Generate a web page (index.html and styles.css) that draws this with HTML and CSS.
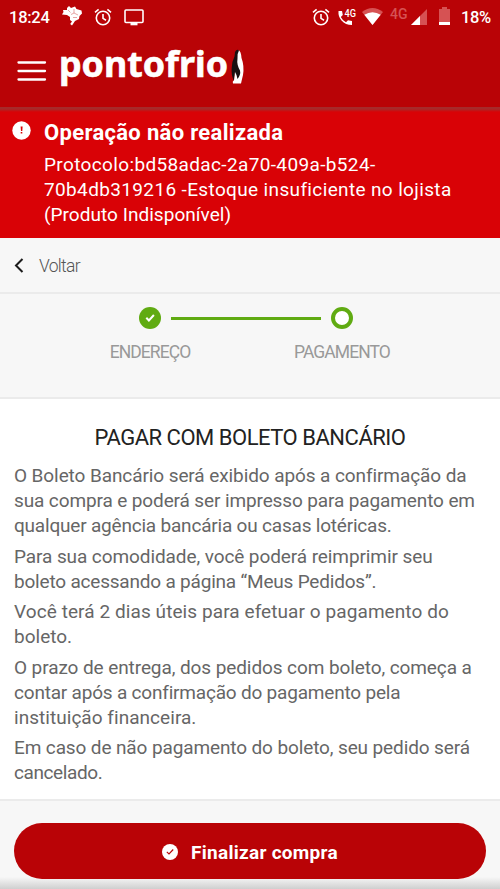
FILE: index.html
```html
<!DOCTYPE html>
<html lang="pt-BR">
<head>
<meta charset="utf-8">
<title>Pontofrio</title>
<link rel="stylesheet" href="styles.css">
</head>
<body>
<header class="top">
  <div class="status">
    <span class="clock">18:24</span>
    <svg class="brazil" width="22" height="22" viewBox="0 0 22 22"><path d="M2 5h4V3l2-2 2 2 4-1.500 1.500 2.500L20.500 5.500 21 8.500 18.500 11 18 14l-4 2-3 4.500-1.800-1.500 1.800-2.500-2-1.500V12L6 10 1 9.500 2.500 7z" fill="#fff"/><path d="M7 5l2.500 2.500M10 9.500l3-1.500 4 2M13 4v4M12 12.500h4" stroke="#cf4a4a" stroke-width=".5" fill="none"/></svg>
    <svg class="alarm" width="18" height="18" viewBox="0 0 18 18" fill="none" stroke="#fff" stroke-width="1.6"><circle cx="9" cy="10" r="6.7"/><path d="M1 4.3l3.6-3M17 4.3l-3.6-3M9 6v4.4l3 1.8"/></svg>
    <svg class="screen" width="20" height="17" viewBox="0 0 20 17"><rect x="1" y="1" width="18" height="12.5" rx="1" fill="none" stroke="#fff" stroke-width="1.6"/><path d="M6.5 14h7v2.3h-7z" fill="#fff"/></svg>
    <svg class="alarm2" width="18" height="18" viewBox="0 0 18 18" fill="none" stroke="#fff" stroke-width="1.6"><circle cx="9" cy="10" r="6.7"/><path d="M1 4.3l3.6-3M17 4.3l-3.6-3M9 6v4.4l3 1.8"/></svg>
    <svg class="call" width="20" height="19" viewBox="0 0 20 19"><path d="M1.500 3h3.500l.8 4-2 2q1.700 3.500 5.200 5.200l2-2 4 .8V17Q8.500 17 4.500 12.500 1 8.500 1.500 3z" fill="#fff"/><text x="7.500" y="9" textLength="11.500" lengthAdjust="spacingAndGlyphs" class="tiny">4G</text></svg>
    <svg class="wifi" width="21" height="17" viewBox="0 0 21 17"><path d="M0 4Q10.500-4 21 4L10.500 17z" fill="#d65253"/><path d="M2.300 6.800Q10.500 1.500 18.700 6.800L10.500 17z" fill="#fff"/></svg>
    <span class="net">4G</span>
    <svg class="signal" width="16" height="16" viewBox="0 0 16 16"><path d="M0 16L16 0v16z" fill="#d65253"/><path d="M0 16l9-9v9z" fill="#fff"/></svg>
    <svg class="battery" width="11" height="18" viewBox="0 0 11 18"><path d="M0 2h3V0h5v2h3v13H0z" fill="#d65253"/><path d="M0 15h11v3H0z" fill="#fff"/></svg>
    <span class="percent">18%</span>
  </div>
  <div class="brand">
    <svg class="menu" width="30" height="22" viewBox="0 0 30 22" stroke="#fff" stroke-width="2.300" stroke-linecap="round"><path d="M1.500 2.500h26.500M1.500 11h26.500M1.500 19.500h26.500"/></svg>
    <svg class="logo" width="186" height="50" viewBox="0 0 186 50"><text class="wordmark" x="-1" y="29" textLength="169" lengthAdjust="spacingAndGlyphs">pontofrio</text><path d="M178.500 2Q181 3 181.500 10 184.500 18 183 27q-1 4-2 8.500H173q-1-2 1-3.500 1-5 0-11l1-12z" fill="#fff"/><path d="M175 4q2-3.500 4-1.500-2 3-1.500 8-1 6 2.500 12 1 4-2.500 8.500-1-5-2.500-7-1 5-1 9-3-6-2.300-13 .3-7 2.800-11.500z" fill="#181010"/></svg>
  </div>
</header>
<section class="alert">
  <svg class="warn" width="19" height="19" viewBox="0 0 19 19"><circle cx="9.500" cy="9.500" r="9.200" fill="#fff"/><path d="M8.600 5.500h2l-.3 4.500H9zM8.700 11h1.600v1.600H8.700z" fill="#d90206"/></svg>
  <div class="message">
    <h1>Operação não realizada</h1>
    <p><span class="m1">Protocolo:bd58adac-2a70-409a-b524-</span><br><span class="m1">70b4db319216 -Estoque insuficiente no lojista</span><br><span class="m3">(Produto Indisponível)</span></p>
  </div>
</section>
<nav class="back">
  <svg width="10" height="15" viewBox="0 0 10 15" fill="none" stroke="#1c1c1c" stroke-width="2"><path d="M8.500 1L2 7.500 8.500 14"/></svg>
  <span>Voltar</span>
</nav>
<section class="steps">
  <div class="track">
    <svg width="22" height="22" viewBox="0 0 22 22"><circle cx="11" cy="11" r="11" fill="#60ab12"/><path d="M7.300 10.800l2.600 2.700 5-5.500" fill="none" stroke="#fff" stroke-width="2"/></svg>
    <i class="bar"></i>
    <i class="ring"></i>
  </div>
  <div class="labels"><span>ENDEREÇO</span><span>PAGAMENTO</span></div>
</section>
<main>
  <h2>PAGAR COM BOLETO BANCÁRIO</h2>
  <p><span class="l1">O Boleto Bancário será exibido após a confirmação da</span><br><span class="l2">sua compra e poderá ser impresso para pagamento em</span><br><span class="l3">qualquer agência bancária ou casas lotéricas.</span></p>
  <p><span class="l1">Para sua comodidade, você poderá reimprimir seu</span><br><span class="l3">boleto acessando a página “Meus Pedidos”.</span></p>
  <p><span class="l6">Você terá 2 dias úteis para efetuar o pagamento do</span><br>boleto.</p>
  <p><span class="l1">O prazo de entrega, dos pedidos com boleto, começa a</span><br><span class="l3">contar após a confirmação do pagamento pela</span><br><span class="l10">instituição financeira.</span></p>
  <p><span class="l2">Em caso de não pagamento do boleto, seu pedido será</span><br><span class="l12">cancelado.</span></p>
</main>
<footer>
  <button>
    <svg width="16" height="16" viewBox="0 0 16 16"><circle cx="8" cy="8" r="8" fill="#fff"/><path d="M4.800 7.800l2.200 2.200 4.200-4.500" fill="none" stroke="#b90306" stroke-width="1.100"/></svg>
    <span>Finalizar compra</span>
  </button>
</footer>
</body>
</html>
```
FILE: styles.css
```css
* { box-sizing: border-box; }
body { margin: 0; width: 500px; height: 889px; overflow: hidden; background: #fff; font-family: Roboto, "Liberation Sans", sans-serif; }
h1, h2, p { margin: 0; font-weight: 400; }
svg { display: block; flex: none; }
p, h2 { white-space: nowrap; }

.top { height: 107px; background: #b90306; color: #fff; }
.status { display: flex; height: 34px; padding-left: 9px; align-items: center; }
.clock { width: 52px; font-size: 16.500px; font-weight: 500; letter-spacing: -.25px; }
.brazil { margin-top: -2px; }
.alarm { margin-left: 11px; margin-top: -1px; }
.screen { margin-left: 12px; }
.alarm2 { margin-left: 168px; margin-top: -1px; }
.call { margin-left: 7px; overflow: visible; }
.wifi { margin-left: 5px; margin-top: -1px; }
.net { width: 20px; margin-left: 7px; margin-top: -7px; font-size: 14px; font-weight: 500; color: #d65253; }
.signal { margin-left: 1px; margin-top: -1px; }
.battery { margin-left: 12px; margin-top: -2px; }
.percent { margin-left: 11px; font-size: 16.500px; font-weight: 500; letter-spacing: -.4px; }
.tiny { font: 500 11px Roboto, sans-serif; fill: #fff; }
.brand { display: flex; padding: 14px 0 0 17px; }
.menu { margin-top: 12px; }
.logo { margin-left: 13px; overflow: visible; }
.wordmark { font: 700 36px "Noto Sans", sans-serif; fill: #fff; stroke: #fff; stroke-width: .6px; }

.alert { display: flex; height: 131px; padding: 14px 0 0 13px; color: #fff; background: linear-gradient(#a62a2a 0, #a62a2a 2px, #d90206 5px); }
.message { margin-left: 12px; }
.warn { margin-left: -1px; margin-right: 1px; }
.alert h1 { font-size: 22px; font-weight: 700; line-height: 24px; letter-spacing: .32px; }
.alert p { margin-top: 7px; font-size: 19px; line-height: 25px; }
.m1 { letter-spacing: .36px; }
.m3 { letter-spacing: .04px; }

.back { display: flex; height: 56px; padding: 1px 0 0 14px; align-items: center; gap: 15px; background: #f7f7f7; border-bottom: 2px solid #ebebeb; color: #555; font-size: 17.500px; font-weight: 300; letter-spacing: -.7px; }
.steps { height: 105px; padding-top: 13px; background: #f7f7f7; border-bottom: 2px solid #ebebeb; }
.track { display: flex; align-items: center; justify-content: center; padding-right: 8px; gap: 10px; }
.bar { width: 150px; height: 3px; background: #60ab12; }
.ring { width: 22px; height: 22px; border: 4px solid #60ab12; border-radius: 50%; background: #fff; }
.labels { display: grid; grid-template-columns: 192px 192px; justify-content: center; padding-right: 8px; margin-top: 13px; text-align: center; font-size: 17.500px; line-height: 20px; letter-spacing: -.92px; color: #999; }

main { height: 400px; padding: 24px 14px 0; color: #666; }
h2 { height: 30px; margin-bottom: 10px; text-align: center; font-size: 22px; line-height: 30px; letter-spacing: -.48px; color: #222; }
main p { margin-bottom: 5.600px; font-size: 19px; line-height: 25px; }
.l1 { letter-spacing: -.09px; }
.l2 { letter-spacing: -.12px; }
.l3 { letter-spacing: -.2px; }
.l6 { letter-spacing: .08px; }
.l10 { letter-spacing: .04px; }
.l12 { letter-spacing: -.4px; }

footer { height: 90px; padding: 22px 14px 0; border-top: 2px solid #ebebeb; background: linear-gradient(#f7f7f7 0, #f7f7f7 76px, #cfcfcf 88px); }
button { display: flex; width: 100%; height: 56px; padding: 2px 0 0; align-items: center; justify-content: center; gap: 13px; border: 0; border-radius: 28px; background: #b90306; color: #fff; font: 700 19px Roboto, sans-serif; letter-spacing: .27px; }
```
